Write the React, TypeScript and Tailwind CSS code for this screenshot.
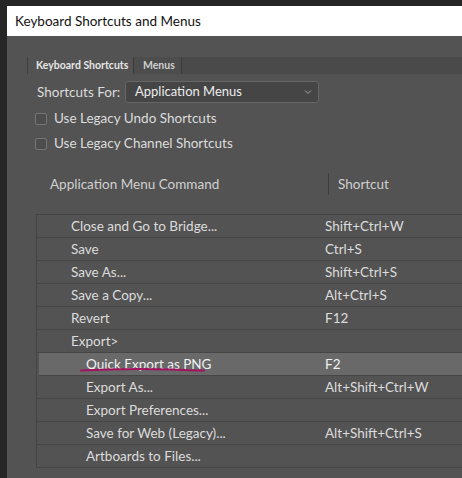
const rows: { name: string; key: string; level: number; active?: boolean }[] = [
  { name: 'Close and Go to Bridge...', key: 'Shift+Ctrl+W', level: 1 },
  { name: 'Save', key: 'Ctrl+S', level: 1 },
  { name: 'Save As...', key: 'Shift+Ctrl+S', level: 1 },
  { name: 'Save a Copy...', key: 'Alt+Ctrl+S', level: 1 },
  { name: 'Revert', key: 'F12', level: 1 },
  { name: 'Export>', key: '', level: 1 },
  { name: 'Quick Export as PNG', key: 'F2', level: 2, active: true },
  { name: 'Export As...', key: 'Alt+Shift+Ctrl+W', level: 2 },
  { name: 'Export Preferences...', key: '', level: 2 },
  { name: 'Save for Web (Legacy)...', key: 'Alt+Shift+Ctrl+S', level: 2 },
  { name: 'Artboards to Files...', key: '', level: 2 },
];

function Checkbox({ label }: { label: string }) {
  return (
    <div className="flex h-[25px] items-center gap-[7px]">
      <span className="h-[12px] w-[12px] rounded-[2px] border border-[#767676] bg-[#4d4d4d]" />
      <span>{label}</span>
    </div>
  );
}

export default function App() {
  return (
    <div
      className="h-[478px] w-[462px] overflow-hidden bg-[#262626] pl-[7px] pt-[6px] text-[13.5px] text-[#dcdcdc]"
      style={{ fontFamily: 'Lato, "Noto Sans", sans-serif' }}
    >
      <div className="h-full bg-[#535353]">
        <div className="flex h-[30px] items-center bg-white pl-[8px] text-[13.5px] text-[#111]">
          Keyboard Shortcuts and Menus
        </div>

        <div className="pl-[20px] pt-[21px]">
          {/* tabs */}
          <div className="flex h-[17px] bg-[#4a4a4a] text-[10.5px] font-bold">
            <div className="flex w-[106px] items-center border-l border-[#3e3e3e] bg-[#535353] pl-[8px] text-[#e6e6e6]">
              Keyboard Shortcuts
            </div>
            <div className="flex w-[49px] items-center border-x border-[#3a3a3a] bg-[#4d4d4d] pl-[9px] text-[#cfcfcf]">
              Menus
            </div>
          </div>

          <div className="mt-[7px] flex items-center pl-[10px]">
            <span className="w-[88px]">Shortcuts For:</span>
            <div className="flex h-[22px] w-[194px] items-center justify-between rounded-[3px] border border-[#666] bg-[#454545] pl-[9px] pr-[6px] text-[13px] text-[#ececec]">
              <span>Application Menus</span>
              <svg width="8" height="6" viewBox="0 0 8 6" fill="none">
                <path d="M1 1.5 L4 4.5 L7 1.5" stroke="#a8a8a8" strokeWidth="1" />
              </svg>
            </div>
          </div>

          <div className="mt-[3px] pl-[8px]">
            <Checkbox label="Use Legacy Undo Shortcuts" />
            <Checkbox label="Use Legacy Channel Shortcuts" />
          </div>

          {/* column header */}
          <div className="mt-[17px] flex h-[22px] items-center text-[#d0d0d0]">
            <span className="w-[301px] pl-[23px]">Application Menu Command</span>
            <span className="h-[22px] w-px bg-[#3c3c3c]" />
            <span className="pl-[9px]">Shortcut</span>
          </div>

          {/* table */}
          <div className="relative ml-[9px] mt-[19px] border-l border-t border-[#444]">
            {rows.map((r) => (
              <div
                key={r.name}
                className={`flex h-[23px] items-center border-b border-[#464646] ${
                  r.active ? 'ml-[2px] bg-[#696969] text-[#f0f0f0]' : ''
                }`}
              >
                <span
                  className={
                    r.level === 1
                      ? 'w-[288px] pl-[34px]'
                      : r.active
                        ? 'w-[286px] pl-[47px]'
                        : 'w-[288px] pl-[49px]'
                  }
                >
                  {r.name}
                </span>
                <span>{r.key}</span>
              </div>
            ))}
            <svg
              className="absolute left-[43px] top-[152px]"
              width="130"
              height="8"
              viewBox="0 0 130 8"
              fill="none"
            >
              <path
                d="M1 3.5 C 30 2, 60 1.5, 90 2.5 C 105 3, 115 4, 124 3.5"
                stroke="#a3125e"
                strokeWidth="2"
                strokeLinecap="round"
              />
            </svg>
          </div>
        </div>
      </div>
    </div>
  );
}
